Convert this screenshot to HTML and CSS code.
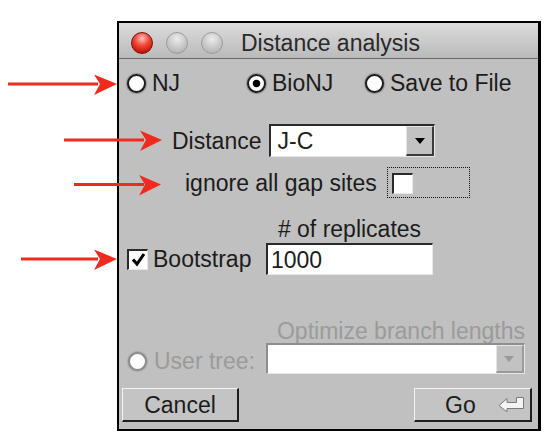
FILE: index.html
```html
<!DOCTYPE html>
<html>
<head>
<meta charset="utf-8">
<link rel="stylesheet" href="styles.css">
</head>
<body>
<div class="window">
  <div class="titlebar">
    <span class="light red"></span>
    <span class="light"></span>
    <span class="light"></span>
    <span class="title">Distance analysis</span>
  </div>
  <div class="content">
    <div class="radios">
      <div class="opt opt-nj"><span class="radio"></span><span>NJ</span></div>
      <div class="opt opt-bionj"><span class="radio on"></span><span>BioNJ</span></div>
      <div class="opt"><span class="radio"></span><span>Save to File</span></div>
    </div>
    <div class="distance">
      <span>Distance</span>
      <div class="combo">
        <span class="combo-text">J-C</span>
        <span class="combo-btn"><svg width="10" height="6" viewBox="0 0 10 6"><polygon points="0,0 10,0 5,6" fill="#000"/></svg></span>
      </div>
    </div>
    <div class="gaps">
      <span>ignore all gap sites</span>
      <div class="focus"><span class="check"></span></div>
    </div>
    <div class="boot">
      <div class="rep-label"># of replicates</div>
      <div class="boot-left">
        <span class="check"><svg width="17" height="17" viewBox="0 0 17 17"><path d="M3 8.5 L7 13 L14 3" fill="none" stroke="#000" stroke-width="3"/></svg></span>
        <span class="boot-text">Bootstrap</span>
      </div>
      <div class="field">1000</div>
    </div>
    <div class="optimize">Optimize branch lengths</div>
    <div class="user">
      <span class="radio dis"></span>
      <span class="user-text">User tree:</span>
      <div class="combo combo-dis">
        <span class="combo-text"></span>
        <span class="combo-btn"><svg width="10" height="6" viewBox="0 0 10 6"><polygon points="0,0 10,0 5,6" fill="#9a9a9a"/></svg></span>
      </div>
    </div>
    <div class="buttons">
      <div class="btn btn-cancel">Cancel</div>
      <div class="btn btn-go">
        <span>Go</span>
        <svg width="27" height="17" viewBox="0 0 27 17"><polygon points="1,9.5 9,2.5 9,6.5 18.5,6.5 18.5,1.5 25.5,1.5 25.5,12.5 9,12.5 9,16" fill="#f4f4f4" stroke="#7a7a7a" stroke-width="1"/></svg>
      </div>
    </div>
  </div>
</div>
<svg class="annot" width="552" height="446" viewBox="0 0 552 446">
  <g fill="#f02a1e" stroke="none">
    <rect x="8" y="82.5" width="90" height="3"/>
    <polygon points="117,84 94,74.5 100,84 94,95"/>
    <rect x="64" y="138.5" width="80" height="3"/>
    <polygon points="162,140 140,130.5 146,140 140,151"/>
    <rect x="74" y="183" width="70" height="3"/>
    <polygon points="161,184.5 139,175 145,184.5 139,195.5"/>
    <rect x="21" y="257.5" width="77" height="3"/>
    <polygon points="117,259 94,249.5 100,259 94,270"/>
  </g>
</svg>
</body>
</html>
```
FILE: styles.css
```css
body {
  margin: 0;
  background: #fff;
  font-family: "Liberation Sans", Arial, sans-serif;
  font-size: 23px;
  line-height: 26px;
  color: #1c1c1c;
  position: relative;
}

.window {
  box-sizing: border-box;
  width: 424px;
  height: 410px;
  margin: 21px 0 0 117px;
  border: 2px solid #000;
  border-right-width: 3px;
  background: #c0c0c0;
  display: flex;
  flex-direction: column;
}

.titlebar {
  box-sizing: border-box;
  height: 36px;
  border-bottom: 1px solid #6a6a6a;
  background: linear-gradient(#dcdcdc, #bababa);
  display: flex;
  align-items: center;
  padding: 4px 0 0 12px;
  color: #2a2a2a;
}

.light {
  width: 22px;
  height: 22px;
  border-radius: 50%;
  margin-right: 13px;
  box-sizing: border-box;
  background: radial-gradient(circle at 50% 30%, #ececec 0, #c6c6c6 55%, #a9a9a9 100%);
  border: 1px solid #9c9c9c;
}

.light.red {
  background: radial-gradient(circle at 50% 28%, #ffc4bc 0, #f2483a 40%, #c0140a 80%, #9a0800 100%);
  border-color: #7e1008;
}

.title {
  margin-left: 5px;
}

.content {
  padding-top: 11px;
  display: flex;
  flex-direction: column;
}

/* radio buttons */
.radios {
  display: flex;
  align-items: center;
  padding-left: 8px;
  height: 26px;
}

.opt {
  display: flex;
  align-items: center;
  gap: 6px;
}

.opt-nj { width: 120px; }
.opt-bionj { width: 118px; }

.radio {
  box-sizing: border-box;
  width: 19px;
  height: 19px;
  border-radius: 50%;
  background: #fff;
  border: 2px solid #1e1e1e;
  box-shadow: 0 0 1px 1px rgba(0, 0, 0, 0.25);
  flex: none;
}

.radio.on {
  background: radial-gradient(circle, #000 0, #000 3.4px, #fff 4.2px);
}

.radio.dis {
  border-color: #8c8c8c;
  box-shadow: 0 0 1px 1px rgba(0, 0, 0, 0.12);
}

/* distance combo */
.distance {
  display: flex;
  align-items: center;
  margin-top: 28px;
  padding-left: 53px;
  height: 33px;
}

.combo {
  box-sizing: border-box;
  width: 166px;
  height: 33px;
  margin-left: 8px;
  background: #fff;
  border-top: 2px solid #2a2a2a;
  border-left: 2px solid #2a2a2a;
  border-right: 1px solid #e8e8e8;
  border-bottom: 1px solid #e8e8e8;
  display: flex;
  align-items: stretch;
}

.combo-text {
  flex: 1;
  padding-left: 6px;
  display: flex;
  align-items: center;
}

.combo-btn {
  box-sizing: border-box;
  width: 28px;
  background: #c2c2c2;
  border-top: 1px solid #e4e4e4;
  border-left: 1px solid #e4e4e4;
  border-right: 2px solid #3a3a3a;
  border-bottom: 2px solid #3a3a3a;
  display: flex;
  align-items: center;
  justify-content: center;
}

.combo-dis {
  width: 259px;
  height: 31px;
  margin-left: 11px;
  border-top-color: #8e8e8e;
  border-left-color: #8e8e8e;
}

.combo-dis .combo-btn {
  border-right-color: #9a9a9a;
  border-bottom-color: #9a9a9a;
}

/* ignore gap sites */
.gaps {
  display: flex;
  align-items: center;
  margin-top: 10px;
  padding-left: 66px;
  height: 31px;
}

.focus {
  box-sizing: border-box;
  width: 83px;
  height: 31px;
  margin-left: 10px;
  border: 1px dotted #111;
  padding: 5px 0 0 4px;
}

.check {
  box-sizing: border-box;
  width: 21px;
  height: 21px;
  background: #fff;
  border-top: 2px solid #2a2a2a;
  border-left: 2px solid #2a2a2a;
  border-right: 1px solid #e8e8e8;
  border-bottom: 1px solid #e8e8e8;
  display: flex;
  align-items: center;
  justify-content: center;
  flex: none;
}

.check svg {
  display: block;
}

/* bootstrap */
.boot {
  display: grid;
  grid-template-columns: 139px 167px;
  grid-template-rows: 26px 32px;
  row-gap: 1px;
  margin-top: 18px;
  padding-left: 8px;
}

.rep-label {
  grid-column: 2;
  grid-row: 1;
  text-align: center;
  white-space: nowrap;
}

.boot-left {
  grid-column: 1;
  grid-row: 2;
  display: flex;
  align-items: center;
  gap: 5px;
}

.field {
  grid-column: 2;
  grid-row: 2;
  box-sizing: border-box;
  width: 167px;
  height: 32px;
  background: #fff;
  border-top: 2px solid #2a2a2a;
  border-left: 2px solid #2a2a2a;
  border-right: 1px solid #e8e8e8;
  border-bottom: 1px solid #e8e8e8;
  padding-left: 3px;
  display: flex;
  align-items: center;
}

/* user tree (disabled) */
.optimize {
  margin-top: 44px;
  line-height: 24px;
  height: 24px;
  text-align: right;
  padding-right: 13px;
  color: #9b9b9b;
  white-space: nowrap;
}

.user {
  display: flex;
  align-items: flex-end;
  height: 31px;
  padding-left: 9px;
  color: #9b9b9b;
}

.user .radio {
  margin-bottom: 3px;
}

.user-text {
  margin-left: 7px;
  line-height: 26px;
}

.user .combo {
  align-self: stretch;
}

/* buttons */
.buttons {
  display: flex;
  justify-content: space-between;
  margin-top: 14px;
  padding: 0 6px 0 3px;
}

.btn {
  box-sizing: border-box;
  height: 34px;
  background: #c4c4c4;
  border-top: 1px solid #f4f4f4;
  border-left: 1px solid #f4f4f4;
  border-right: 2px solid #1e1e1e;
  border-bottom: 2px solid #1e1e1e;
  display: flex;
  align-items: center;
}

.btn-cancel {
  width: 117px;
  justify-content: center;
}

.btn-go {
  width: 118px;
  padding-left: 30px;
  gap: 22px;
}

.btn-go svg {
  display: block;
}

.annot {
  position: absolute;
  left: 0;
  top: 0;
  pointer-events: none;
}
```
